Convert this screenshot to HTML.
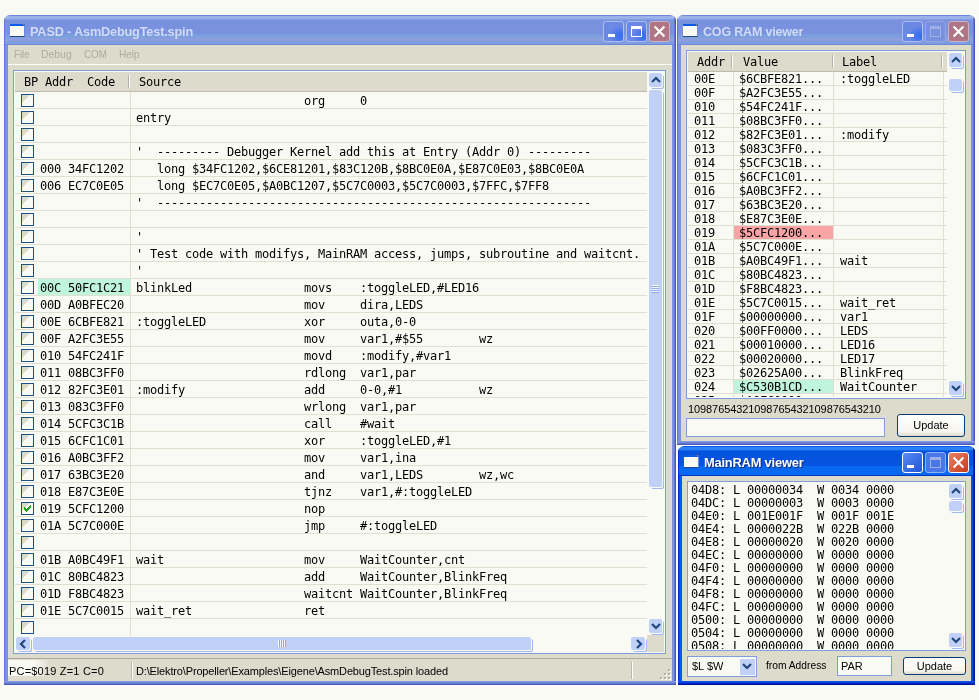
<!DOCTYPE html><html><head><meta charset="utf-8"><title>PASD</title><style>
*{box-sizing:border-box;margin:0;padding:0}
html,body{width:979px;height:700px;overflow:hidden;background:#fafaf5}
body{position:relative;font-family:"Liberation Sans",sans-serif;font-size:11px;color:#000}
.abs{position:absolute}
.win{position:absolute;border-radius:6px 6px 0 0;overflow:hidden;will-change:transform}
.bl,.br,.bb{position:absolute}
.bl{left:0;top:30px;bottom:0;width:4px}
.br{right:0;top:30px;bottom:0;width:4px}
.bb{left:0;right:0;bottom:0;height:4px}
.inact .bl{background:linear-gradient(90deg,#6674d5 0 1px,#7b91e0 1px 4px)}
.inact .br{background:linear-gradient(90deg,#7b91e0 0 2px,#6474d1 2px 3px,#4c56bb 3px 4px)}
.inact .bb{background:linear-gradient(#8299e3 0 1px,#7189db 1px 2px,#6074d0 2px 3px,#4b5dc0 3px 4px)}
.act .bl{background:linear-gradient(90deg,#0030d8 0 1px,#0048ea 1px 2px,#0060f8 2px 3px,#0058f0 3px 4px)}
.act .br{background:linear-gradient(90deg,#0855e8 0 1px,#0040dc 1px 2px,#0028c0 2px 3px,#00109e 3px 4px)}
.act .bb{background:linear-gradient(#0855e8 0 1px,#0040dc 1px 2px,#0028c0 2px 3px,#00109e 3px 4px)}
.tb{position:absolute;left:0;top:0;right:0;height:30px}
.inact .tb{background:linear-gradient(#6d87dc 0 1px,#9ab2e8 1px 4px,#869ee3 4px 5px,#7a91e0 5px 19px,#7b9edc 19px 22px,#859fde 22px 24px,#8f9ede 24px 26px,#7f9edf 26px 29px,#6c86dc 29px 30px)}
.act .tb{background:linear-gradient(#0a5ae6 0 1px,#2b80f4 1px 4px,#0f62ea 4px 5px,#0554e0 5px 20px,#0869f0 20px 29px,#0238c0 29px 30px)}
.inact .tb{box-shadow:inset 1px 0 0 #6674d5,inset -1px 0 0 #4c56bb,inset -2px 0 0 #6474d1}
.act .tb{box-shadow:inset 1px 0 0 #0030d8,inset -1px 0 0 #00109e,inset -2px 0 0 #0028c0}
.ttl{position:absolute;left:26px;top:9px;font:bold 13px "Liberation Sans",sans-serif;white-space:nowrap;letter-spacing:-0.2px;transform-origin:0 0}
.inact .ttl{color:#d0dbf6}
.act .ttl{color:#fff;text-shadow:1px 1px 0 #0a2a80}
.ico{position:absolute;left:6px;top:9px;width:15px;height:13px;background:#fafaf5;border-top:2px solid #0b5be4;border-bottom:1px solid #1b4a86;border-right:1px solid #6a8be0}
.ico::after{content:'';position:absolute;right:0;top:-2px;width:1px;height:1px;background:#e8703a}
.body{position:absolute;left:4px;top:30px;right:4px;bottom:4px;background:#dddbcc}
.cb{position:absolute;top:6px;width:21px;height:21px;border-radius:3px;border:1px solid #dfe6fa}
.inact .cb{background:radial-gradient(ellipse at 92% 72%,#3a6bf2 0%,#4875ee 22%,#6b88e2 50%);border-color:#aebcee}
.inact .cb.x{background:#b07686;border-color:#cbb2c6}
.inact .cb.dis{background:#7a92dd;border-color:#93a6e4}
.act .cb{background:linear-gradient(135deg,#5a8af5,#1f55d8);border-color:#fff}
.act .cb.x{background:linear-gradient(135deg,#e8836a,#c8371a);border-color:#fff}
.act .cb.dis{background:#4a77e8;border-color:#8fb0f5}
.mono{font-family:"DejaVu Sans Mono","Liberation Mono",monospace;font-size:12px;letter-spacing:-0.224px;white-space:pre}
.lv{position:absolute;background:#fafaf5;border:1px solid #7f9ddb;overflow:hidden}
.lv::after{content:'';position:absolute;left:0;top:0;right:0;bottom:0;border:1px solid #fafaf5;z-index:5}
.hdr{position:absolute;left:1px;top:0;height:21px;background:#dddbcc;border-bottom:1px solid #bdbbab;border-top:1px solid #fafaf5}
.hdr span{position:absolute;top:3px}
.hdr i{position:absolute;top:3px;width:2px;height:13px;border-left:1px solid #b4b2a4;border-right:1px solid #fff}
.row{position:absolute;left:1px;border-bottom:1px solid #e1dfd0}
.row span{position:absolute;top:0}
.mrow span{top:1px}
.vl{position:absolute;width:1px;background:#e1dfd0}
.chk{position:absolute;width:13px;height:13px;border:1px solid #1c5180;background:linear-gradient(135deg,#d6d4c5 0,#dddbcc 33%,#fafaf5 40%)}
.sb{position:absolute;background:#c1d0f6;border-radius:2px;box-shadow:1px 1px 0 #fafaf5,2px 2px 0 #a3b8ee}
.btn{position:absolute;border:1px solid #0a3c78;border-radius:3px;background:linear-gradient(#fff,#f6f5ee 80%,#dcd9c9);text-align:center;font-size:11px}
.inp{position:absolute;background:#fafaf5;border:1px solid #7f9ddb}
</style></head><body><div class="win inact" style="left:4px;top:15px;width:672px;height:670px"><div class="tb"><div class="ico"></div><div class="ttl" style="transform:scaleX(0.981)">PASD - AsmDebugTest.spin</div><div class="cb" style="left:599px"><div class="abs" style="left:4px;top:12px;width:7px;height:3px;background:#fff"></div></div><div class="cb" style="left:622px"><div class="abs" style="left:4px;top:4px;width:11px;height:11px;border:1px solid #fff;border-top-width:3px"></div></div><div class="cb x" style="left:645px"><svg class="abs" style="left:0;top:0" width="19" height="19" viewBox="0 0 19 19"><path d="M4.6 4.6 L14.4 14.4 M14.4 4.6 L4.6 14.4" stroke="#fff" stroke-width="2.1" fill="none"/></svg></div></div><div class="bl"></div><div class="br"></div><div class="bb"></div><div class="body"><div class="abs" style="left:0;top:0;right:0;height:20px;border-bottom:1px solid #fff;color:#aeac9e;font-size:11px"><span class="abs" style="left:5.5px;top:3px;transform:scaleX(0.885);transform-origin:0 0">File</span><span class="abs" style="left:33.4px;top:3px;transform:scaleX(0.947);transform-origin:0 0">Debug</span><span class="abs" style="left:76.3px;top:3px;transform:scaleX(0.892);transform-origin:0 0">COM</span><span class="abs" style="left:111.3px;top:3px;transform:scaleX(0.915);transform-origin:0 0">Help</span></div><div class="lv" style="left:5px;top:25px;width:653px;height:584px"><div class="hdr mono" style="width:632px"><span style="left:9px">BP Addr  Code</span><i style="left:113px"></i><span style="left:124px">Source</span></div><div class="row mrow mono" style="top:21px;width:632px;height:17px;line-height:17px"><div class="chk" style="left:6px;top:2px"></div><span style="left:121px">                        org     0</span></div><div class="row mrow mono" style="top:38px;width:632px;height:17px;line-height:17px"><div class="chk" style="left:6px;top:2px"></div><span style="left:121px">entry</span></div><div class="row mrow mono" style="top:55px;width:632px;height:17px;line-height:17px"><div class="chk" style="left:6px;top:2px"></div></div><div class="row mrow mono" style="top:72px;width:632px;height:17px;line-height:17px"><div class="chk" style="left:6px;top:2px"></div><span style="left:121px">'  --------- Debugger Kernel add this at Entry (Addr 0) ---------</span></div><div class="row mrow mono" style="top:89px;width:632px;height:17px;line-height:17px"><div class="chk" style="left:6px;top:2px"></div><span style="left:25px">000 34FC1202</span><span style="left:121px">   long $34FC1202,$6CE81201,$83C120B,$8BC0E0A,$E87C0E03,$8BC0E0A</span></div><div class="row mrow mono" style="top:106px;width:632px;height:17px;line-height:17px"><div class="chk" style="left:6px;top:2px"></div><span style="left:25px">006 EC7C0E05</span><span style="left:121px">   long $EC7C0E05,$A0BC1207,$5C7C0003,$5C7C0003,$7FFC,$7FF8</span></div><div class="row mrow mono" style="top:123px;width:632px;height:17px;line-height:17px"><div class="chk" style="left:6px;top:2px"></div><span style="left:121px">'  --------------------------------------------------------------</span></div><div class="row mrow mono" style="top:140px;width:632px;height:17px;line-height:17px"><div class="chk" style="left:6px;top:2px"></div></div><div class="row mrow mono" style="top:157px;width:632px;height:17px;line-height:17px"><div class="chk" style="left:6px;top:2px"></div><span style="left:121px">'</span></div><div class="row mrow mono" style="top:174px;width:632px;height:17px;line-height:17px"><div class="chk" style="left:6px;top:2px"></div><span style="left:121px">' Test code with modifys, MainRAM access, jumps, subroutine and waitcnt.</span></div><div class="row mrow mono" style="top:191px;width:632px;height:17px;line-height:17px"><div class="chk" style="left:6px;top:2px"></div><span style="left:121px">'</span></div><div class="row mrow mono" style="top:208px;width:632px;height:17px;line-height:17px"><div class="abs" style="left:23px;top:0;width:92px;height:16px;background:#bff4dd"></div><div class="chk" style="left:6px;top:2px"></div><span style="left:25px">00C 50FC1C21</span><span style="left:121px">blinkLed                movs    :toggleLED,#LED16</span></div><div class="row mrow mono" style="top:225px;width:632px;height:17px;line-height:17px"><div class="chk" style="left:6px;top:2px"></div><span style="left:25px">00D A0BFEC20</span><span style="left:121px">                        mov     dira,LEDS</span></div><div class="row mrow mono" style="top:242px;width:632px;height:17px;line-height:17px"><div class="chk" style="left:6px;top:2px"></div><span style="left:25px">00E 6CBFE821</span><span style="left:121px">:toggleLED              xor     outa,0-0</span></div><div class="row mrow mono" style="top:259px;width:632px;height:17px;line-height:17px"><div class="chk" style="left:6px;top:2px"></div><span style="left:25px">00F A2FC3E55</span><span style="left:121px">                        mov     var1,#$55        wz</span></div><div class="row mrow mono" style="top:276px;width:632px;height:17px;line-height:17px"><div class="chk" style="left:6px;top:2px"></div><span style="left:25px">010 54FC241F</span><span style="left:121px">                        movd    :modify,#var1</span></div><div class="row mrow mono" style="top:293px;width:632px;height:17px;line-height:17px"><div class="chk" style="left:6px;top:2px"></div><span style="left:25px">011 08BC3FF0</span><span style="left:121px">                        rdlong  var1,par</span></div><div class="row mrow mono" style="top:310px;width:632px;height:17px;line-height:17px"><div class="chk" style="left:6px;top:2px"></div><span style="left:25px">012 82FC3E01</span><span style="left:121px">:modify                 add     0-0,#1           wz</span></div><div class="row mrow mono" style="top:327px;width:632px;height:17px;line-height:17px"><div class="chk" style="left:6px;top:2px"></div><span style="left:25px">013 083C3FF0</span><span style="left:121px">                        wrlong  var1,par</span></div><div class="row mrow mono" style="top:344px;width:632px;height:17px;line-height:17px"><div class="chk" style="left:6px;top:2px"></div><span style="left:25px">014 5CFC3C1B</span><span style="left:121px">                        call    #wait</span></div><div class="row mrow mono" style="top:361px;width:632px;height:17px;line-height:17px"><div class="chk" style="left:6px;top:2px"></div><span style="left:25px">015 6CFC1C01</span><span style="left:121px">                        xor     :toggleLED,#1</span></div><div class="row mrow mono" style="top:378px;width:632px;height:17px;line-height:17px"><div class="chk" style="left:6px;top:2px"></div><span style="left:25px">016 A0BC3FF2</span><span style="left:121px">                        mov     var1,ina</span></div><div class="row mrow mono" style="top:395px;width:632px;height:17px;line-height:17px"><div class="chk" style="left:6px;top:2px"></div><span style="left:25px">017 63BC3E20</span><span style="left:121px">                        and     var1,LEDS        wz,wc</span></div><div class="row mrow mono" style="top:412px;width:632px;height:17px;line-height:17px"><div class="chk" style="left:6px;top:2px"></div><span style="left:25px">018 E87C3E0E</span><span style="left:121px">                        tjnz    var1,#:toggleLED</span></div><div class="row mrow mono" style="top:429px;width:632px;height:17px;line-height:17px"><div class="chk" style="left:6px;top:2px"><svg class="abs" style="left:2px;top:2px" width="7" height="7" viewBox="0 0 7 7" shape-rendering="crispEdges"><path d="M0 2h1v1h1v1h1v-1h1v-1h1v-1h1v-1h1v3h-1v1h-1v1h-1v1h-1v1h-1v-1h-1v-1h-1z" fill="#21a121"/></svg></div><span style="left:25px">019 5CFC1200</span><span style="left:121px">                        nop</span></div><div class="row mrow mono" style="top:446px;width:632px;height:17px;line-height:17px"><div class="chk" style="left:6px;top:2px"></div><span style="left:25px">01A 5C7C000E</span><span style="left:121px">                        jmp     #:toggleLED</span></div><div class="row mrow mono" style="top:463px;width:632px;height:17px;line-height:17px"><div class="chk" style="left:6px;top:2px"></div></div><div class="row mrow mono" style="top:480px;width:632px;height:17px;line-height:17px"><div class="chk" style="left:6px;top:2px"></div><span style="left:25px">01B A0BC49F1</span><span style="left:121px">wait                    mov     WaitCounter,cnt</span></div><div class="row mrow mono" style="top:497px;width:632px;height:17px;line-height:17px"><div class="chk" style="left:6px;top:2px"></div><span style="left:25px">01C 80BC4823</span><span style="left:121px">                        add     WaitCounter,BlinkFreq</span></div><div class="row mrow mono" style="top:514px;width:632px;height:17px;line-height:17px"><div class="chk" style="left:6px;top:2px"></div><span style="left:25px">01D F8BC4823</span><span style="left:121px">                        waitcnt WaitCounter,BlinkFreq</span></div><div class="row mrow mono" style="top:531px;width:632px;height:17px;line-height:17px"><div class="chk" style="left:6px;top:2px"></div><span style="left:25px">01E 5C7C0015</span><span style="left:121px">wait_ret                ret</span></div><div class="row mrow mono" style="top:548px;width:632px;height:17px;line-height:17px;border-bottom:0"><div class="chk" style="left:6px;top:2px"></div></div><div class="vl" style="left:116px;top:21px;height:544px"></div><div class="abs" style="left:634px;top:0px;width:17px;height:565px;background:#fafaf5"><div class="sb" style="left:1px;top:2px;width:13px;height:14px"></div><svg class="abs" style="left:0.5px;top:2px" width="14" height="14" viewBox="-7 -7 14 14"><path d="M-4 2 L0 -2 L4 2" fill="none" stroke="#20477c" stroke-width="2.2"/></svg><div class="sb" style="left:1px;top:19px;width:13px;height:397px"></div><div class="abs" style="left:4px;top:214px;width:7px;height:8px;background:repeating-linear-gradient(#fafaf5 0 1px,#8ea5e6 1px 2px)"></div><div class="sb" style="left:1px;top:548px;width:13px;height:14px"></div><svg class="abs" style="left:0.5px;top:548px" width="14" height="14" viewBox="-7 -7 14 14"><path d="M-4 -2 L0 2 L4 -2" fill="none" stroke="#20477c" stroke-width="2.2"/></svg></div><div class="abs" style="left:0px;top:565px;width:634px;height:17px;background:#fafaf5"><div class="sb" style="left:2px;top:1px;width:14px;height:13px"></div><svg class="abs" style="left:1.5px;top:1px" width="14" height="14" viewBox="-7 -7 14 14"><path d="M2 -4 L-2 0 L2 4" fill="none" stroke="#20477c" stroke-width="2.2"/></svg><div class="sb" style="left:19px;top:1px;width:498px;height:13px"></div><div class="abs" style="left:264px;top:4px;width:8px;height:7px;background:repeating-linear-gradient(90deg,#fafaf5 0 1px,#8ea5e6 1px 2px)"></div><div class="sb" style="left:617px;top:1px;width:14px;height:13px"></div><svg class="abs" style="left:617.5px;top:1px" width="14" height="14" viewBox="-7 -7 14 14"><path d="M-2 -4 L2 0 L-2 4" fill="none" stroke="#20477c" stroke-width="2.2"/></svg></div><div class="abs" style="left:633px;top:564px;width:17px;height:17px;background:#dddbcc"></div></div><div class="abs" style="left:0;top:613px;right:0;height:23px;border-top:1px solid #aeab9c;font-size:11px"><div class="abs" style="left:0;top:1px;width:42px;height:16px;background:linear-gradient(90deg,#fafaf5 0,#fafaf5 62%,rgba(250,250,245,0) 100%)"></div><span class="abs" style="left:1px;top:6px;letter-spacing:0.2px">PC=$019 Z=1 C=0</span><i class="abs" style="left:123px;top:3px;width:2px;height:17px;border-left:1px solid #bab8aa;border-right:1px solid #fff"></i><span class="abs" style="left:128px;top:6px;letter-spacing:-0.15px">D:\Elektro\Propeller\Examples\Eigene\AsmDebugTest.spin loaded</span><div class="abs" style="left:652px;top:10px;width:12px;height:12px"><i class="abs" style="left:9px;top:1px;width:2px;height:2px;background:#fff"></i><i class="abs" style="left:8px;top:0px;width:2px;height:2px;background:#b5b3a6"></i><i class="abs" style="left:5px;top:5px;width:2px;height:2px;background:#fff"></i><i class="abs" style="left:4px;top:4px;width:2px;height:2px;background:#b5b3a6"></i><i class="abs" style="left:9px;top:5px;width:2px;height:2px;background:#fff"></i><i class="abs" style="left:8px;top:4px;width:2px;height:2px;background:#b5b3a6"></i><i class="abs" style="left:1px;top:9px;width:2px;height:2px;background:#fff"></i><i class="abs" style="left:0px;top:8px;width:2px;height:2px;background:#b5b3a6"></i><i class="abs" style="left:5px;top:9px;width:2px;height:2px;background:#fff"></i><i class="abs" style="left:4px;top:8px;width:2px;height:2px;background:#b5b3a6"></i><i class="abs" style="left:9px;top:9px;width:2px;height:2px;background:#fff"></i><i class="abs" style="left:8px;top:8px;width:2px;height:2px;background:#b5b3a6"></i></div><i class="abs" style="left:623px;top:3px;width:2px;height:17px;border-left:1px solid #bab8aa;border-right:1px solid #fff"></i></div></div></div><div class="win inact" style="left:677px;top:15px;width:298px;height:430px"><div class="tb"><div class="ico"></div><div class="ttl" style="transform:scaleX(0.963)">COG RAM viewer</div><div class="cb" style="left:225px"><div class="abs" style="left:4px;top:12px;width:7px;height:3px;background:#fff"></div></div><div class="cb dis" style="left:248px"><div class="abs" style="left:4px;top:4px;width:11px;height:11px;border:1px solid #9fb0e8;border-top-width:3px"></div></div><div class="cb x" style="left:271px"><svg class="abs" style="left:0;top:0" width="19" height="19" viewBox="0 0 19 19"><path d="M4.6 4.6 L14.4 14.4 M14.4 4.6 L4.6 14.4" stroke="#fff" stroke-width="2.1" fill="none"/></svg></div></div><div class="bl"></div><div class="br"></div><div class="bb"></div><div class="body"><div class="lv" style="left:5px;top:5px;width:280px;height:349px"><div class="hdr mono" style="width:259px"><span style="left:9px">Addr</span><i style="left:43px"></i><span style="left:55px">Value</span><i style="left:144px"></i><span style="left:154px">Label</span><i style="left:253px"></i></div><div class="row mono" style="top:21px;width:259px;height:14px;line-height:14px"><span style="left:6px">00E</span><span style="left:51px">$6CBFE821...</span><span style="left:152px">:toggleLED</span></div><div class="row mono" style="top:35px;width:259px;height:14px;line-height:14px"><span style="left:6px">00F</span><span style="left:51px">$A2FC3E55...</span></div><div class="row mono" style="top:49px;width:259px;height:14px;line-height:14px"><span style="left:6px">010</span><span style="left:51px">$54FC241F...</span></div><div class="row mono" style="top:63px;width:259px;height:14px;line-height:14px"><span style="left:6px">011</span><span style="left:51px">$08BC3FF0...</span></div><div class="row mono" style="top:77px;width:259px;height:14px;line-height:14px"><span style="left:6px">012</span><span style="left:51px">$82FC3E01...</span><span style="left:152px">:modify</span></div><div class="row mono" style="top:91px;width:259px;height:14px;line-height:14px"><span style="left:6px">013</span><span style="left:51px">$083C3FF0...</span></div><div class="row mono" style="top:105px;width:259px;height:14px;line-height:14px"><span style="left:6px">014</span><span style="left:51px">$5CFC3C1B...</span></div><div class="row mono" style="top:119px;width:259px;height:14px;line-height:14px"><span style="left:6px">015</span><span style="left:51px">$6CFC1C01...</span></div><div class="row mono" style="top:133px;width:259px;height:14px;line-height:14px"><span style="left:6px">016</span><span style="left:51px">$A0BC3FF2...</span></div><div class="row mono" style="top:147px;width:259px;height:14px;line-height:14px"><span style="left:6px">017</span><span style="left:51px">$63BC3E20...</span></div><div class="row mono" style="top:161px;width:259px;height:14px;line-height:14px"><span style="left:6px">018</span><span style="left:51px">$E87C3E0E...</span></div><div class="row mono" style="top:175px;width:259px;height:14px;line-height:14px"><div class="abs" style="left:46px;top:0;width:99px;height:13px;background:#f9a5a5"></div><span style="left:6px">019</span><span style="left:51px">$5CFC1200...</span></div><div class="row mono" style="top:189px;width:259px;height:14px;line-height:14px"><span style="left:6px">01A</span><span style="left:51px">$5C7C000E...</span></div><div class="row mono" style="top:203px;width:259px;height:14px;line-height:14px"><span style="left:6px">01B</span><span style="left:51px">$A0BC49F1...</span><span style="left:152px">wait</span></div><div class="row mono" style="top:217px;width:259px;height:14px;line-height:14px"><span style="left:6px">01C</span><span style="left:51px">$80BC4823...</span></div><div class="row mono" style="top:231px;width:259px;height:14px;line-height:14px"><span style="left:6px">01D</span><span style="left:51px">$F8BC4823...</span></div><div class="row mono" style="top:245px;width:259px;height:14px;line-height:14px"><span style="left:6px">01E</span><span style="left:51px">$5C7C0015...</span><span style="left:152px">wait_ret</span></div><div class="row mono" style="top:259px;width:259px;height:14px;line-height:14px"><span style="left:6px">01F</span><span style="left:51px">$00000000...</span><span style="left:152px">var1</span></div><div class="row mono" style="top:273px;width:259px;height:14px;line-height:14px"><span style="left:6px">020</span><span style="left:51px">$00FF0000...</span><span style="left:152px">LEDS</span></div><div class="row mono" style="top:287px;width:259px;height:14px;line-height:14px"><span style="left:6px">021</span><span style="left:51px">$00010000...</span><span style="left:152px">LED16</span></div><div class="row mono" style="top:301px;width:259px;height:14px;line-height:14px"><span style="left:6px">022</span><span style="left:51px">$00020000...</span><span style="left:152px">LED17</span></div><div class="row mono" style="top:315px;width:259px;height:14px;line-height:14px"><span style="left:6px">023</span><span style="left:51px">$02625A00...</span><span style="left:152px">BlinkFreq</span></div><div class="row mono" style="top:329px;width:259px;height:14px;line-height:14px"><div class="abs" style="left:46px;top:0;width:99px;height:13px;background:#bff4dd"></div><span style="left:6px">024</span><span style="left:51px">$C530B1CD...</span><span style="left:152px">WaitCounter</span></div><div class="row mono" style="top:343px;width:259px;height:14px;line-height:14px"><span style="left:6px">025</span><span style="left:51px">$A0FC0000...</span></div><div class="vl" style="left:46px;top:21px;height:330px"></div><div class="vl" style="left:146px;top:21px;height:330px"></div><div class="vl" style="left:256px;top:21px;height:330px"></div><div class="abs" style="left:261px;top:0px;width:17px;height:347px;background:#fafaf5"><div class="sb" style="left:1px;top:2px;width:13px;height:14px"></div><svg class="abs" style="left:0.5px;top:2px" width="14" height="14" viewBox="-7 -7 14 14"><path d="M-4 2 L0 -2 L4 2" fill="none" stroke="#20477c" stroke-width="2.2"/></svg><div class="sb" style="left:1px;top:28px;width:13px;height:12px"></div><div class="sb" style="left:1px;top:330px;width:13px;height:14px"></div><svg class="abs" style="left:0.5px;top:330px" width="14" height="14" viewBox="-7 -7 14 14"><path d="M-4 -2 L0 2 L4 -2" fill="none" stroke="#20477c" stroke-width="2.2"/></svg></div></div><span class="abs" style="left:7px;top:358px;font-size:11px;letter-spacing:-0.09px">10987654321098765432109876543210</span><div class="inp" style="left:5px;top:373px;width:199px;height:19px"></div><div class="btn" style="left:216px;top:369px;width:68px;height:23px;line-height:21px">Update</div></div></div><div class="win act" style="left:678px;top:446px;width:297px;height:239px"><div class="tb"><div class="ico"></div><div class="ttl" style="transform:scaleX(0.99)">MainRAM viewer</div><div class="cb" style="left:224px"><div class="abs" style="left:4px;top:12px;width:7px;height:3px;background:#fff"></div></div><div class="cb dis" style="left:247px"><div class="abs" style="left:4px;top:4px;width:11px;height:11px;border:1px solid #9fb0e8;border-top-width:3px"></div></div><div class="cb x" style="left:270px"><svg class="abs" style="left:0;top:0" width="19" height="19" viewBox="0 0 19 19"><path d="M4.6 4.6 L14.4 14.4 M14.4 4.6 L4.6 14.4" stroke="#fff" stroke-width="2.1" fill="none"/></svg></div></div><div class="bl"></div><div class="br"></div><div class="bb"></div><div class="body"><div class="lv ta" style="left:5px;top:5px;width:279px;height:170px"><div class="abs mono" style="left:3px;top:2px;height:13px;line-height:13px">04D8: L 00000034  W 0034 0000</div><div class="abs mono" style="left:3px;top:15px;height:13px;line-height:13px">04DC: L 00000003  W 0003 0000</div><div class="abs mono" style="left:3px;top:28px;height:13px;line-height:13px">04E0: L 001E001F  W 001F 001E</div><div class="abs mono" style="left:3px;top:41px;height:13px;line-height:13px">04E4: L 0000022B  W 022B 0000</div><div class="abs mono" style="left:3px;top:54px;height:13px;line-height:13px">04E8: L 00000020  W 0020 0000</div><div class="abs mono" style="left:3px;top:67px;height:13px;line-height:13px">04EC: L 00000000  W 0000 0000</div><div class="abs mono" style="left:3px;top:80px;height:13px;line-height:13px">04F0: L 00000000  W 0000 0000</div><div class="abs mono" style="left:3px;top:93px;height:13px;line-height:13px">04F4: L 00000000  W 0000 0000</div><div class="abs mono" style="left:3px;top:106px;height:13px;line-height:13px">04F8: L 00000000  W 0000 0000</div><div class="abs mono" style="left:3px;top:119px;height:13px;line-height:13px">04FC: L 00000000  W 0000 0000</div><div class="abs mono" style="left:3px;top:132px;height:13px;line-height:13px">0500: L 00000000  W 0000 0000</div><div class="abs mono" style="left:3px;top:145px;height:13px;line-height:13px">0504: L 00000000  W 0000 0000</div><div class="abs mono" style="left:3px;top:158px;height:13px;line-height:13px">0508: L 00000000  W 0000 0000</div><div class="abs" style="left:260px;top:0px;width:17px;height:168px;background:#fafaf5"><div class="sb" style="left:1px;top:2px;width:13px;height:14px"></div><svg class="abs" style="left:0.5px;top:2px" width="14" height="14" viewBox="-7 -7 14 14"><path d="M-4 2 L0 -2 L4 2" fill="none" stroke="#20477c" stroke-width="2.2"/></svg><div class="sb" style="left:1px;top:19px;width:13px;height:10px"></div><div class="sb" style="left:1px;top:151px;width:13px;height:14px"></div><svg class="abs" style="left:0.5px;top:151px" width="14" height="14" viewBox="-7 -7 14 14"><path d="M-4 -2 L0 2 L4 -2" fill="none" stroke="#20477c" stroke-width="2.2"/></svg></div></div><div class="inp" style="left:5px;top:180px;width:70px;height:21px"><span class="abs" style="left:4px;top:3px;font-size:11px">$L $W</span><div class="abs" style="left:52px;top:2px;width:15px;height:16px;background:#c1d0f6"></div><svg class="abs" style="left:52px;top:2px" width="14" height="14" viewBox="-7 -7 14 14"><path d="M-4 -2 L0 2 L4 -2" fill="none" stroke="#20477c" stroke-width="2.2"/></svg></div><span class="abs" style="left:84px;top:183px;font-size:11px;transform:scaleX(0.932);transform-origin:0 0;white-space:nowrap">from Address</span><div class="inp" style="left:155px;top:180px;width:55px;height:20px"><span class="abs" style="left:3px;top:3px;font-size:11px">PAR</span></div><div class="btn" style="left:221px;top:181px;width:63px;height:18px;line-height:16px">Update</div></div></div></body></html>
